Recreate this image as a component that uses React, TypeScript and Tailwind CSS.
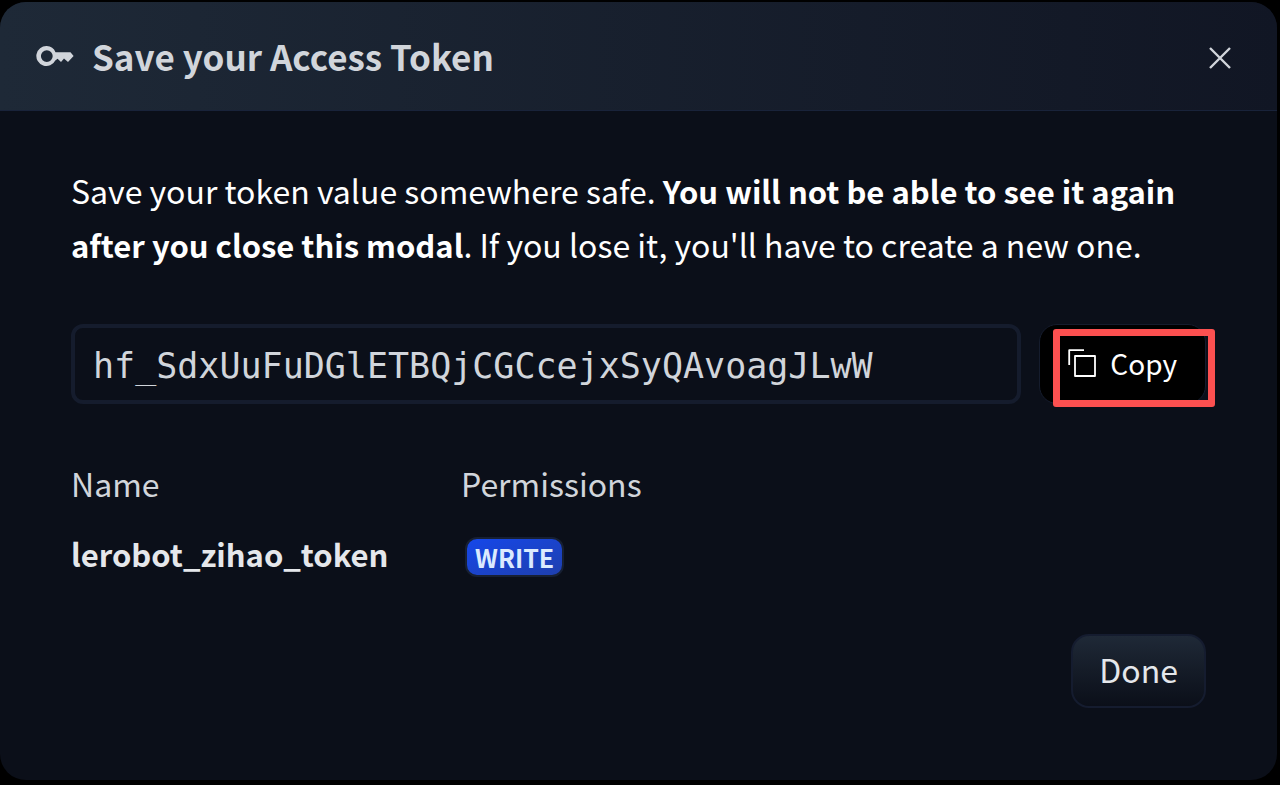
import React from 'react';

const token = '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';

const permissions = [{ name: 'lerobot_zihao_token', role: 'WRITE' }];

const KeyIcon = () => (
  <svg width="38" height="24" viewBox="0 0 38 24" fill="currentColor" aria-hidden="true">
    <path
      fillRule="evenodd"
      d="M10.8 2a10 10 0 0 1 8.700 6.200H34.500L37.600 12l-5.600 6-4-3.600-3 3.600-3.400-3.300-2.300 1.700A10 10 0 1 1 10.800 2Zm0 4.200a5.900 5.900 0 1 0 0 11.800 5.900 5.900 0 0 0 0-11.800Z"
    />
  </svg>
);

const CloseIcon = () => (
  <svg width="24" height="24" viewBox="0 0 24 24" fill="none" stroke="currentColor" strokeWidth="2.400" aria-hidden="true">
    <path d="M2 2l20 20M22 2L2 22" />
  </svg>
);

const CopyIcon = () => (
  <svg width="28" height="28" viewBox="0 0 28 28" fill="none" stroke="currentColor" strokeWidth="1.800" strokeLinejoin="round" aria-hidden="true">
    <rect x="7" y="7" width="20" height="20" />
    <path d="M1.200 16V1.200H16" />
  </svg>
);

const Header = () => (
  <header className="flex items-center justify-between border-b border-[#19233a] bg-gradient-to-r from-[#1e2937] to-[#111624] pt-[14px] pr-[45px] pb-[14px] pl-9 text-[#d1d5db]">
    <h1 className="flex items-center gap-[18px] text-[35px] leading-[80px] font-bold">
      <KeyIcon />
      Save your Access Token
    </h1>
    <button type="button" aria-label="Close" className="pt-1">
      <CloseIcon />
    </button>
  </header>
);

export default function App() {
  return (
    <div className="min-h-screen bg-black pt-0.5 pr-[3px] font-['Noto_Sans_CJK_SC',sans-serif]">
      <main role="dialog" aria-label="Save your Access Token" className="overflow-hidden rounded-[26px] bg-[#0b0f19]">
        <Header />
        <div className="px-[71px] pt-[52px] pb-[72px]">
          <p className="text-[32px] leading-[54px] text-white">
            Save your token value somewhere safe. <strong className="text-[31px] leading-none font-bold">You will not be able to see it again after you close this modal</strong>. If you lose it, you'll have to create a new one.
          </p>

          <div className="mt-[53px] flex items-stretch gap-[18px]">
            <input
              type="text"
              readOnly
              aria-label="Access token"
              value={token}
              className="h-20 min-w-0 flex-1 rounded-xl border-4 border-[#151c2d] bg-transparent px-[18px] pt-1 font-['DejaVu_Sans_Mono',monospace] text-[35px] text-[#d1d5db] outline-none"
            />
            <div className="relative">
              <button type="button" className="flex h-full items-center gap-[14px] rounded-[18px] border border-[#151c2d] bg-black px-7 pb-0.5 text-[28px] text-white">
                <CopyIcon />
                Copy
              </button>
              <span className="pointer-events-none absolute top-[5px] -right-[9px] -bottom-[3px] left-[14px] rounded-[3px] border-[7px] border-[#fc5050]" />
            </div>
          </div>

          <table className="mt-[52px] w-full table-fixed text-left text-[32px] leading-[54px]">
            <thead>
              <tr className="text-[#d1d5db]">
                <th className="w-[390px] pb-[17px] font-normal">Name</th>
                <th className="pb-[17px] font-normal">Permissions</th>
              </tr>
            </thead>
            <tbody>
              {permissions.map((item) => (
                <tr key={item.name} className="text-[#e5e7eb]">
                  <td className="text-[31px] font-bold">{item.name}</td>
                  <td>
                    <div className="flex h-[54px] items-end pb-1 pl-1">
                      <span className="rounded-xl border-2 border-[#172033] bg-gradient-to-br from-[#1547ea] to-[#1e3fae] px-2 text-[25px] leading-[36px] font-bold text-[#dbeafe]">
                        {item.role}
                      </span>
                    </div>
                  </td>
                </tr>
              ))}
            </tbody>
          </table>

          <div className="mt-[53px] flex justify-end">
            <button type="button" className="h-[74px] rounded-[18px] border-2 border-[#151c2f] bg-gradient-to-b from-[#1f2937] to-[#0b0f19] px-[26px] pb-1 text-[32px] text-[#e5e7eb]">
              Done
            </button>
          </div>
        </div>
      </main>
    </div>
  );
}
